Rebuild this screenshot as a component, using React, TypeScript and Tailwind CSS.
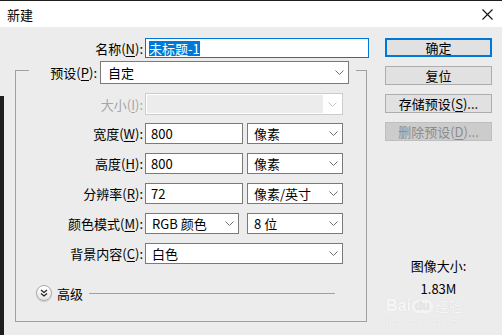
import React from "react";

const font = "font-['Noto_Sans_CJK_SC','Microsoft_YaHei',sans-serif]";

function Chevron({ color = "#6d6d6d" }: { color?: string }) {
  return (
    <svg width="9" height="5" viewBox="0 0 9 5" className="shrink-0">
      <polyline points="0.5,0.5 4.5,4.5 8.5,0.5" fill="none" stroke={color} strokeWidth="1" />
    </svg>
  );
}

function Label({ text, k, disabled = false, className = "" }: { text: string; k: string; disabled?: boolean; className?: string }) {
  return (
    <span className={`whitespace-nowrap text-right ${disabled ? "text-[#a6a6a6]" : "text-black"} ${className}`}>
      {text}(<span className="underline underline-offset-[2px]">{k}</span>):
    </span>
  );
}

function Select({ value, className }: { value: string; className: string }) {
  return (
    <div className={`flex items-center justify-between border border-[#7a7a7a] bg-white pl-[6px] pr-[4px] ${className}`}>
      <span className="whitespace-nowrap">{value}</span>
      <Chevron />
    </div>
  );
}

function Field({ value, className }: { value: string; className: string }) {
  return <div className={`flex items-center border border-[#7a7a7a] bg-white pl-[5px] ${className}`}>{value}</div>;
}

function Btn({ children, primary = false, disabled = false }: { children: React.ReactNode; primary?: boolean; disabled?: boolean }) {
  const cls = primary
    ? "border-2 border-[#0078d7] bg-[#e1e1e1] text-black"
    : disabled
      ? "border border-[#bfbfbf] bg-[#cccccc] text-[#8c8c8c]"
      : "border border-[#adadad] bg-[#e1e1e1] text-black";
  return <div className={`flex h-[19px] w-[107px] items-center justify-center whitespace-nowrap ${cls}`}>{children}</div>;
}

export default function App() {
  return (
    <div className={`relative flex h-[335px] w-[502px] flex-col overflow-hidden bg-[#1e1e1e] pt-[1px] text-[13px] leading-none text-black ${font}`}>
      <div className="flex h-[26px] shrink-0 items-center bg-white pl-[7px]">
        <span>新建</span>
        <svg width="11" height="11" viewBox="0 0 11 11" className="ml-auto mr-[9px]">
          <path d="M0.5 0.5 L10.5 10.5 M10.5 0.5 L0.5 10.5" stroke="#111" strokeWidth="1.1" />
        </svg>
      </div>

      <div className="flex flex-1 bg-[#ececec]">
        <div className="flex w-[4px] flex-col">
          <div className="h-[69px] bg-[#ececec]" />
          <div className="flex-1 bg-[#1e1e1e]" />
        </div>

        <div className="flex w-[381px] flex-col">
          <div className="mt-[11px] flex items-center">
            <Label text="名称" k="N" className="w-[139px]" />
            <div className="ml-[2px] flex h-[20px] w-[224px] items-center border border-[#0078d7] bg-white pl-[3px]">
              <span className="bg-[#0078d7] leading-[15px] text-white">未标题-1</span>
            </div>
          </div>

          <div className="ml-[11px] mt-[12px] flex h-[252px] w-[352px] flex-col border border-[#a0a0a0]">
            <div className="-mt-[10px] ml-[13px] flex w-fit items-center bg-[#ececec] pr-[7px]">
              <Label text="预设" k="P" className="w-[71px] pr-[3px]" />
              <Select value="自定" className="h-[23px] w-[249px] pl-[7px]" />
            </div>

            <div className="mt-[9px] flex items-center">
              <Label text="大小" k="I" disabled className="w-[129px] pr-[2px]" />
              <div className="flex h-[22px] w-[198px] border border-[#cccccc] bg-white p-[1px]">
                <div className="flex-1 bg-[#ececec]" />
                <div className="flex w-[18px] items-center justify-center">
                  <Chevron color="#c4c4c4" />
                </div>
              </div>
            </div>

            <div className="mt-[8px] flex items-center">
              <Label text="宽度" k="W" className="w-[129px] pr-[2px]" />
              <Field value="800" className="h-[21px] w-[98px]" />
              <Select value="像素" className="ml-[4px] h-[21px] w-[96px]" />
            </div>

            <div className="mt-[9px] flex items-center">
              <Label text="高度" k="H" className="w-[129px] pr-[2px]" />
              <Field value="800" className="h-[21px] w-[98px]" />
              <Select value="像素" className="ml-[4px] h-[21px] w-[96px]" />
            </div>

            <div className="mt-[9px] flex items-center">
              <Label text="分辨率" k="R" className="w-[129px] pr-[2px]" />
              <Field value="72" className="h-[21px] w-[98px]" />
              <Select value="像素/英寸" className="ml-[4px] h-[21px] w-[96px]" />
            </div>

            <div className="mt-[9px] flex items-center">
              <Label text="颜色模式" k="M" className="w-[129px] pr-[2px]" />
              <Select value="RGB 颜色" className="h-[21px] w-[94px]" />
              <Select value="8 位" className="ml-[8px] h-[21px] w-[96px]" />
            </div>

            <div className="mt-[9px] flex items-center">
              <Label text="背景内容" k="C" className="w-[129px] pr-[2px]" />
              <Select value="白色" className="h-[21px] w-[198px]" />
            </div>

            <div className="ml-[20px] mt-[21px] flex items-center">
              <div className="flex h-[16px] w-[16px] items-center justify-center rounded-full border border-[#a9a9a9] bg-gradient-to-b from-white to-[#e4e4e4] shadow-[0_1px_1px_rgba(0,0,0,0.15)]">
                <svg width="8" height="8" viewBox="0 0 8 8">
                  <polyline points="1,1 4,3.5 7,1" fill="none" stroke="#222" strokeWidth="1.2" />
                  <polyline points="1,4.5 4,7 7,4.5" fill="none" stroke="#222" strokeWidth="1.2" />
                </svg>
              </div>
              <span className="ml-[5px]">高级</span>
              <div className="ml-[6px] h-[1px] w-[246px] bg-[#a0a0a0]" />
            </div>
          </div>
        </div>

        <div className="flex w-[107px] flex-col">
          <div className="mt-[11px] flex flex-col gap-[9px]">
            <Btn primary>确定</Btn>
            <Btn>复位</Btn>
            <Btn>
              存储预设(<span className="underline underline-offset-[2px]">S</span>)...
            </Btn>
            <Btn disabled>
              删除预设(<span className="underline underline-offset-[2px]">D</span>)...
            </Btn>
          </div>
          <div className="mt-[117px] text-center leading-[16px]">图像大小:</div>
          <div className="mt-[7px] text-center leading-[16px]">1.83M</div>
        </div>
      </div>

      <div className="pointer-events-none absolute left-[386px] top-[298px] flex flex-col items-start text-[#f7f7f7] [text-shadow:0_0_1px_#d2d2d2]">
        <div className="flex items-center">
          <span className="font-['Liberation_Sans',sans-serif] text-[16px] font-bold leading-none">Bai</span>
          <span className="ml-[1px] rounded-full bg-[#f4f4f4] px-[3px] font-['Liberation_Sans',sans-serif] text-[12px] font-bold leading-[13px] text-[#e6e6e6]">du</span>
          <span className="ml-[2px] text-[14px] leading-none">经验</span>
        </div>
        <span className="mt-[3px] font-['Liberation_Serif',serif] text-[10px] leading-none">jingyan.baidu.com</span>
      </div>
    </div>
  );
}
